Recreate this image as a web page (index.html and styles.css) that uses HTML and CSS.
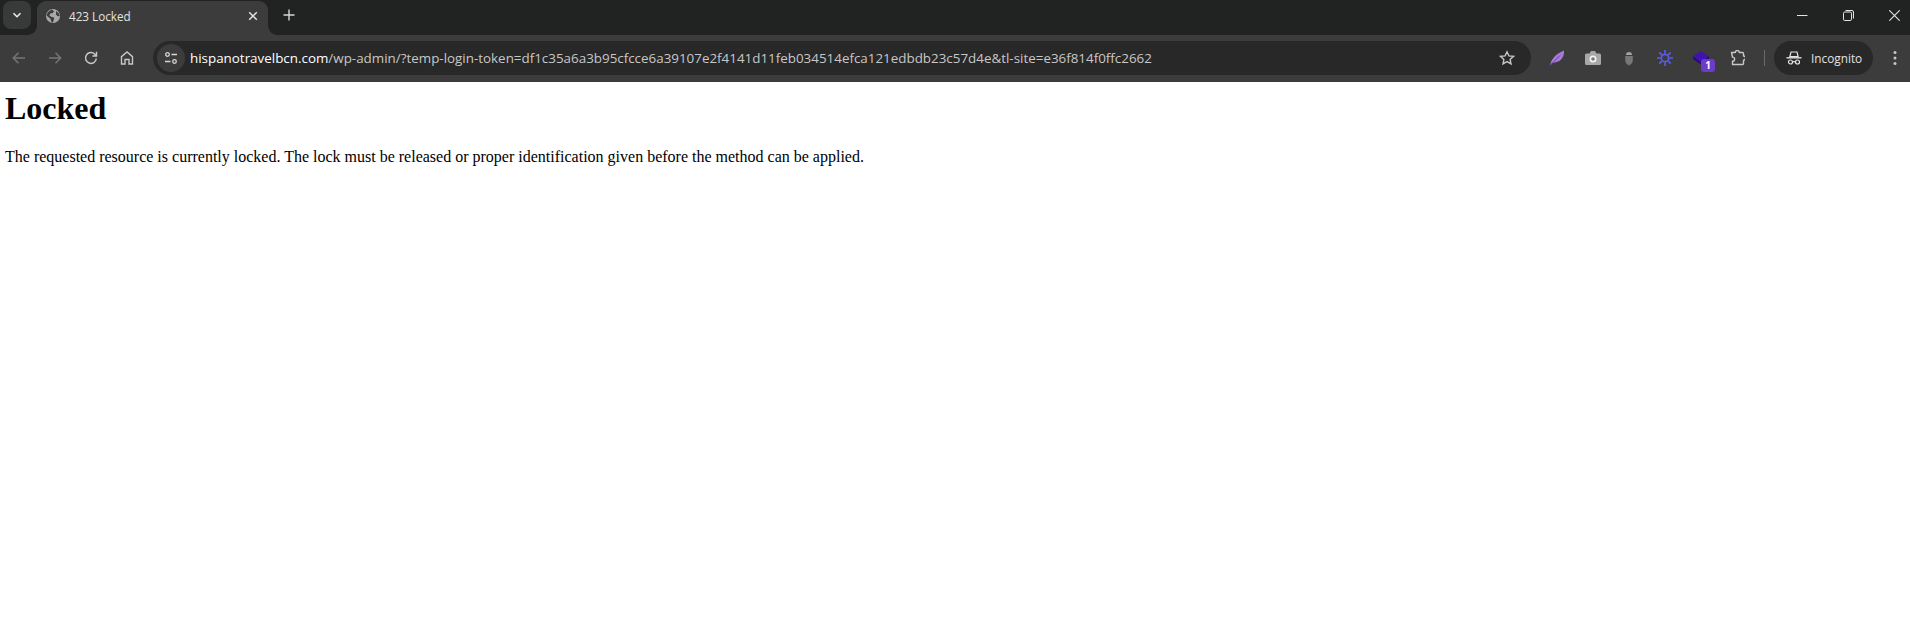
FILE: index.html
```html
<!DOCTYPE html>
<html lang="en">
<head>
<meta charset="utf-8">
<title>423 Locked</title>
<link rel="stylesheet" href="styles.css">
</head>
<body>
<header class="chrome">
  <div class="tabstrip">
    <button class="tabsearch" aria-label="Search tabs">
      <svg width="12" height="12" viewBox="0 0 12 12"><path d="M2.500 4.200 6 7.700l3.500-3.500" fill="none" stroke="#e8eaed" stroke-width="1.600"/></svg>
    </button>
    <div class="tab">
      <svg class="favicon" width="16" height="16" viewBox="0 0 16 16"><circle cx="8" cy="8" r="7" fill="#a6a8ab"/><path d="M6.800 1.400 9 3.200 7.800 5 5.200 5.600 4.400 7.400 6.600 9l2 .2.600 1.600-1.400 3.600-1.200-.2L5.400 10.800 1.600 7.600l1.200-3.400zM11 3l2.800 2.400.8 2.600-2 .2-1.600-1.600z" fill="#3c3c3c"/></svg>
      <span class="tabtitle">423 Locked</span>
      <svg class="tabclose" width="10" height="10" viewBox="0 0 10 10"><path d="M1.200 1.200l7.600 7.600M8.800 1.200 1.200 8.800" stroke="#e3e3e3" stroke-width="1.500"/></svg>
    </div>
    <svg class="newtab" width="12" height="12" viewBox="0 0 12 12"><path d="M6 .5v11M.5 6h11" stroke="#d6d6d6" stroke-width="1.400"/></svg>
    <div class="winctrls">
      <svg width="11" height="11" viewBox="0 0 11 11"><path d="M0 5.500h10.500" stroke="#e3e3e3" stroke-width="1"/></svg>
      <svg width="11" height="11" viewBox="0 0 11 11"><rect x=".5" y="2" width="8" height="8.500" rx="1.300" fill="none" stroke="#e3e3e3"/><path d="M2.500 .5h6.500a1.500 1.500 0 0 1 1.500 1.500v6.500" fill="none" stroke="#e3e3e3"/></svg>
      <svg width="11" height="11" viewBox="0 0 11 11"><path d="M.3.3l10.400 10.400M10.700.3.3 10.700" stroke="#e3e3e3" stroke-width="1.100"/></svg>
    </div>
  </div>
  <div class="toolbar">
    <svg class="nav" width="16" height="16" viewBox="0 0 16 16"><path d="M14 8H2.500M7.500 2.800 2.300 8l5.200 5.200" fill="none" stroke="#757575" stroke-width="1.500"/></svg>
    <svg class="nav" width="16" height="16" viewBox="0 0 16 16"><path d="M2 8h11.500M8.500 2.800 13.700 8l-5.200 5.200" fill="none" stroke="#757575" stroke-width="1.500"/></svg>
    <svg class="nav" width="16" height="16" viewBox="0 0 16 16"><path d="M13.300 8.500A5.400 5.400 0 1 1 11.800 4.200L13.400 6M13.500 1.800V6H9.400" fill="none" stroke="#c7c7c7" stroke-width="1.500"/></svg>
    <svg class="nav" width="16" height="16" viewBox="0 0 16 16"><path d="M2.500 14V6.600L8 2l5.500 4.600V14H10V9.500H6V14z" fill="none" stroke="#c7c7c7" stroke-width="1.400"/></svg>
    <div class="omnibox">
      <span class="siteinfo">
        <svg width="16" height="16" viewBox="0 0 16 16" fill="none" stroke="#d6d6d6" stroke-width="1.300"><circle cx="4.500" cy="4.500" r="1.800"/><path d="M8.500 4.500H14M2 11.500h5.500"/><circle cx="11.500" cy="11.500" r="1.800"/></svg>
      </span>
      <span class="url"><span class="host">hispanotravelbcn.com</span>/wp-admin/?temp-login-token=df1c35a6a3b95cfcce6a39107e2f4141d11feb034514efca121edbdb23c57d4e&amp;tl-site=e36f814f0ffc2662</span>
      <svg class="star" width="16" height="16" viewBox="0 0 16 16"><path d="M8 1.800l1.900 4.100 4.500.5-3.300 3 .9 4.400L8 11.600l-4 2.200.9-4.400-3.300-3 4.500-.5z" fill="none" stroke="#c7c7c7" stroke-width="1.400"/></svg>
    </div>
    <div class="extensions">
      <svg width="16" height="16" viewBox="0 0 16 16"><path d="M1 15.500C2 10 6 4 15 .5c.5 4-1 8-4.500 10.500L6 12.500 3 13z" fill="#a678d8"/><path d="M1 15.500 11 5.500" stroke="#6d3f99" stroke-width=".9"/></svg>
      <svg width="16" height="16" viewBox="0 0 16 16"><path d="M1.500 3.500h3L6 1h4l1.500 2.500h3A1.500 1.500 0 0 1 16 5v8.500a1.500 1.500 0 0 1-1.500 1.500h-13A1.500 1.500 0 0 1 0 13.500V5a1.500 1.500 0 0 1 1.500-1.500z" fill="#a8a8a8"/><circle cx="8" cy="9" r="3.500" fill="#f2f2f2"/><circle cx="8" cy="9" r="1.800" fill="#777"/></svg>
      <svg width="16" height="16" viewBox="0 0 16 16"><path d="M4.200 6h7.600v4.500C11.800 13 9.500 15 8 15.500 6.500 15 4.200 13 4.200 10.500z" fill="#777"/><path d="M5 5a3 3 0 0 1 6 0z" fill="#a2a2a2"/></svg>
      <svg width="16" height="16" viewBox="0 0 16 16" stroke="#5c5ce6" stroke-width="1.700" fill="none"><circle cx="8" cy="8" r="3.700"/><path d="M8 0v3.500M8 12.500V16M0 8h3.500M12.500 8H16M2.300 2.300l2.500 2.500M11.200 11.200l2.500 2.500M13.700 2.300l-2.500 2.500M4.800 11.200l-2.500 2.500"/></svg>
      <span class="extbadge">
        <svg width="16" height="16" viewBox="0 0 16 16"><path d="M8 0l8 5.500-8 5.500-8-5.500z" fill="#4012b0"/><path d="M0 5.500v2.500l8 5.500 8-5.500V5.500l-8 5.500z" fill="#2c0880"/></svg>
        <span class="badge">1</span>
      </span>
      <svg width="16" height="16" viewBox="-1 0 16 16"><path d="M1.500 2.500h3.800a2 2 0 0 1 4 0h3.200a1 1 0 0 1 1 1V6a2.100 2.100 0 0 1 0 4.200v3.300a1 1 0 0 1-1 1h-10v-3.200a2.100 2.100 0 0 0 0-4.200z" fill="none" stroke="#c7c7c7" stroke-width="1.400" stroke-linejoin="round"/></svg>
    </div>
    <span class="divider"></span>
    <div class="incognito">
      <svg width="16" height="16" viewBox="0 0 16 16" fill="none" stroke="#e3e3e3" stroke-width="1.200"><path d="M5 2h6l1.100 4.500H3.900z"/><path d="M.5 7.800h15" stroke-width="1.400"/><circle cx="4.500" cy="12" r="2"/><circle cx="11.500" cy="12" r="2"/><path d="M6.500 11.700h3"/></svg>
      <span>Incognito</span>
    </div>
    <svg class="menu" width="4" height="16" viewBox="0 0 4 16"><circle cx="2" cy="2.500" r="1.500" fill="#c7c7c7"/><circle cx="2" cy="8" r="1.500" fill="#c7c7c7"/><circle cx="2" cy="13.500" r="1.500" fill="#c7c7c7"/></svg>
  </div>
</header>
<main class="page">
  <h1>Locked</h1>
  <p>The requested resource is currently locked. The lock must be released or proper identification given before the method can be applied.</p>
</main>
</body>
</html>
```
FILE: styles.css
```css
* { box-sizing: border-box; }
html, body { margin: 0; padding: 0; height: 100%; background: #fff; overflow: hidden; }
.chrome { font-family: "Open Sans", "Noto Sans", sans-serif; color: #e3e3e3; }
.tabstrip { height: 35px; background: #202322; display: flex; align-items: center; position: relative; }
.tabsearch { width: 28px; height: 28px; margin-left: 3px; margin-top: -5px; border: 0; border-radius: 8px; background: #383a3a; display: flex; align-items: center; justify-content: center; padding: 0; flex: none; }
.tab { width: 231px; height: 34px; margin-top: 1px; margin-left: 6px; background: #3c3c3c; border-radius: 9px 9px 0 0; display: flex; align-items: center; padding: 0 10px 0 8px; align-self: flex-start; position: relative; flex: none; }
.tab::before, .tab::after { content: ""; position: absolute; bottom: 0; width: 9px; height: 9px; }
.tab::before { left: -9px; background: radial-gradient(circle at 0 0, transparent 8.500px, #3c3c3c 9px); }
.tab::after { right: -9px; background: radial-gradient(circle at 100% 0, transparent 8.500px, #3c3c3c 9px); }
.favicon { margin-right: 8px; margin-top: -4px; flex: none; }
.tabtitle { font-size: 11.700px; flex: 1; margin-top: -4px; }
.tabclose { margin-right: 0; margin-top: -4px; flex: none; }
.newtab { margin-left: 15px; margin-top: -5px; flex: none; }
.winctrls { margin-left: auto; display: flex; align-items: center; gap: 35px; padding-right: 10px; margin-top: -5px; }
.toolbar { height: 47px; background: #3c3c3c; display: flex; align-items: center; padding: 0 0 1px 11px; }
.nav { margin-right: 20px; flex: none; }
.omnibox { width: 1378px; height: 34px; margin-left: -2px; background: #282828; border-radius: 17px; display: flex; align-items: center; padding-left: 4px; flex: none; }
.siteinfo { width: 28px; height: 28px; border-radius: 50%; background: #3c3c3c; display: flex; align-items: center; justify-content: center; flex: none; }
.url { font-size: 13.400px; color: #c7c7c7; margin-left: 5px; white-space: nowrap; flex: 1; }
.host { color: #fff; }
.star { margin-right: 16px; flex: none; }
.extensions { display: flex; align-items: center; gap: 20px; margin-left: 18px; flex: none; }
.extbadge { position: relative; display: block; width: 16px; height: 16px; }
.badge { position: absolute; left: 8px; top: 9px; width: 14px; height: 13px; background: #6c3cc8; border-radius: 3px; color: #fff; font-size: 10px; font-weight: 700; line-height: 13px; text-align: center; }
.divider { width: 1px; height: 16px; background: #6a6a6a; margin-left: 19px; flex: none; }
.incognito { width: 99px; height: 34px; border-radius: 17px; background: #282828; margin-left: 9px; display: flex; align-items: center; gap: 9px; padding-left: 12px; font-size: 11.800px; flex: none; }
.menu { margin-left: 20px; flex: none; }
.page { padding: 0 5px; font-family: "Liberation Serif", "Times New Roman", serif; color: #000; }
h1 { font-size: 32px; font-weight: 700; line-height: 37px; margin: 8px 0 0; }
p { font-size: 16px; line-height: 18px; margin: 21px 0 0; }
```
